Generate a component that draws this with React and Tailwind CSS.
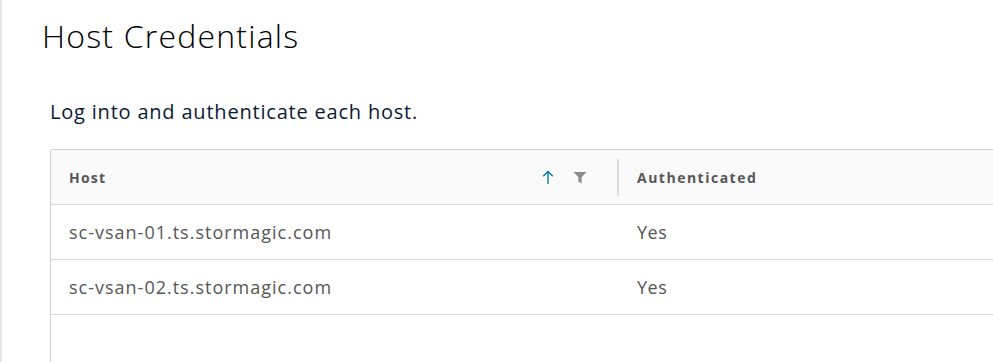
import React from "react";

function SortUp() {
  return (
    <svg width="12" height="15" viewBox="0 0 12 15" fill="none">
      <path d="M6 14V1.5M1.2 6.3L6 1.5L10.8 6.3" stroke="#0072a3" strokeWidth="1.3" />
    </svg>
  );
}

function Filter() {
  return (
    <svg width="14" height="13" viewBox="0 0 14 13">
      <path d="M0.5 1h13L8.6 6.2v6.3L5.4 10.6V6.2z" fill="#8c8c8c" />
    </svg>
  );
}

export default function App() {
  const rows = [
    ["sc-vsan-01.ts.stormagic.com", "Yes"],
    ["sc-vsan-02.ts.stormagic.com", "Yes"],
  ];
  return (
    <div className="w-[993px] h-[362px] overflow-hidden bg-white flex" style={{ fontFamily: "'Open Sans', sans-serif" }}>
      <div className="w-[2px] bg-[#e6e6e6] shrink-0" />
      <div className="flex-1 pl-[40px] pt-[14px]">
        <h1 className="text-[32px] leading-[44px] font-light text-black tracking-[1.2px]">Host Credentials</h1>
        <p className="mt-[41px] ml-[8px] text-[20px] leading-[26px] text-[#0a1a33] tracking-[0.8px]">
          Log into and authenticate each host.
        </p>
        <div className="mt-[24px] ml-[8px] w-[1000px] border-l border-t border-[#d0d0d0] rounded-tl-[3px]">
          <div className="flex h-[55px] bg-[#fafafa] border-b border-[#d7d7d7] items-center">
            <div className="w-[568px] pl-[18px] pr-[0px] flex items-center h-full">
              <span className="text-[14px] font-bold text-[#565656] tracking-[1.2px]">Host</span>
              <div className="ml-auto flex items-center gap-[19px]">
                <SortUp />
                <Filter />
              </div>
              <div className="ml-[30px] w-[2px] h-[37px] bg-[#dedede]" />
            </div>
            <div className="pl-[18px] text-[14px] font-bold text-[#565656] tracking-[1.5px]">Authenticated</div>
          </div>
          {rows.map((r, i) => (
            <div key={i} className="flex h-[55px] items-center border-b border-[#d7d7d7] text-[18px] text-[#565656]">
              <div className="w-[568px] pl-[18px] tracking-[1px]">{r[0]}</div>
              <div className="pl-[18px] tracking-[0.5px]">{r[1]}</div>
            </div>
          ))}
          <div className="h-[60px]" />
        </div>
      </div>
    </div>
  );
}
